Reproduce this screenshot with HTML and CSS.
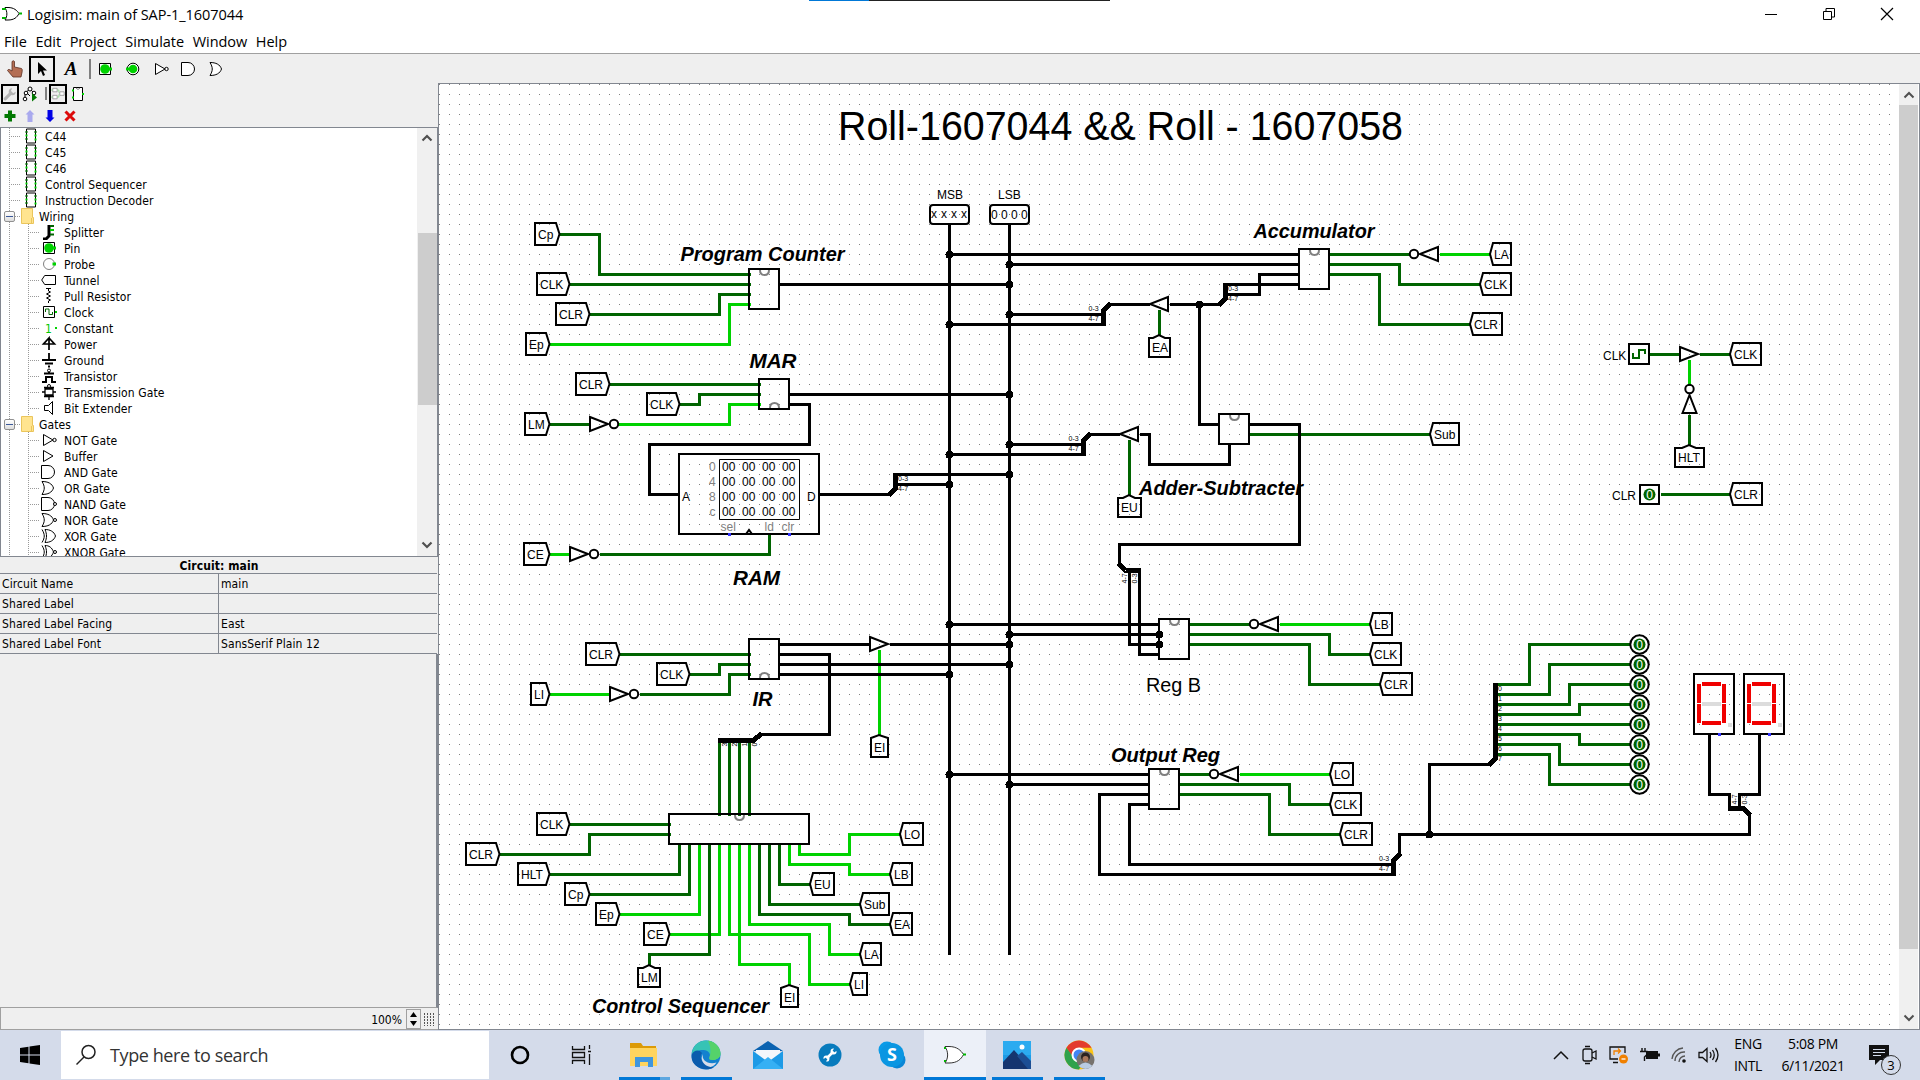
FILE: index.html
```html
<!DOCTYPE html>
<html lang="en">
<head>
<meta charset="utf-8">
<title>Logisim: main of SAP-1_1607044</title>
<link rel="stylesheet" href="styles.css">
</head>
<body>
<svg class="defs" width="0" height="0">
  <defs>
    <symbol id="chip" viewBox="0 0 16 16"><path d="M3 1h9v14H3z" fill="#fff" stroke="#000"/><path d="M2 4h2M2 11h2M11 4h2" stroke="#006400" stroke-width="2"/><path d="M2 7.500h2M11 7.500h2M11 11.500h2" stroke="#00d200" stroke-width="2"/></symbol>
    <symbol id="folder" viewBox="0 0 16 16"><path d="M.5 .5h11v9h1v6H.5z" fill="#ffe48f" stroke="#eac55c"/><path d="M10.500 15V10" stroke="#eac55c"/></symbol>
    <symbol id="splitter" viewBox="0 0 16 16"><path d="M2 15h3l3-3V1" fill="none" stroke="#000" stroke-width="3"/><path d="M9 2h4M9 10.500h4" stroke="#006400" stroke-width="2"/><path d="M9 6h4" stroke="#00d200" stroke-width="2"/></symbol>
    <symbol id="pin" viewBox="0 0 16 16"><path d="M2.500 2.500h11v11h-11z" fill="#fff" stroke="#000"/><circle cx="8" cy="8" r="4.800" fill="#00d200"/><path d="M12 8h3" stroke="#00d200" stroke-width="3"/></symbol>
    <symbol id="outpin" viewBox="0 0 16 16"><circle cx="8" cy="8" r="5.800" fill="#fff" stroke="#000"/><circle cx="8" cy="8" r="4.300" fill="#00d200"/><path d="M1 8h3" stroke="#00d200" stroke-width="3"/></symbol>
    <symbol id="probe" viewBox="0 0 16 16"><circle cx="8" cy="8" r="5.500" fill="#fff" stroke="#808080"/><path d="M11.500 8h3.500" stroke="#00d200" stroke-width="3"/></symbol>
    <symbol id="tunnel" viewBox="0 0 16 16"><path d="M.7 8l3-4.500h10.800v9H3.700z" fill="#fff" stroke="#000"/></symbol>
    <symbol id="resistor" viewBox="0 0 16 16"><path d="M5 .5h5M7.500 1v2l2 1-4 2 4 2-4 2 4 2-2 1v2" fill="none" stroke="#000"/></symbol>
    <symbol id="clock" viewBox="0 0 16 16"><path d="M2.500 2.500h11v11h-11z" fill="#fff" stroke="#000"/><path d="M4.500 8V5h3.500v5.500h3.500V8" fill="none" stroke="#006400"/><path d="M14 8h2" stroke="#00d200" stroke-width="2"/></symbol>
    <symbol id="power" viewBox="0 0 16 16"><path d="M8 14V2L2.500 8h11L8 2" fill="none" stroke="#000" stroke-width="1.700"/></symbol>
    <symbol id="ground" viewBox="0 0 16 16"><path d="M8 1v7M1 8h14M4 11.500h8M7 14.500h2" stroke="#000" stroke-width="1.800"/></symbol>
    <symbol id="transistor" viewBox="0 0 16 16"><path d="M1 14h4V9h6v5h4M3 5.500h10M8 5V3" fill="none" stroke="#000" stroke-width="2"/><circle cx="8" cy="2.500" r="1.500" fill="#fff" stroke="#000"/></symbol>
    <symbol id="tgate" viewBox="0 0 16 16"><path d="M1 8h3V5h8v3h3M4 8v3h8V8M3 3.500h10M3 12.500h10M8 12v4" fill="none" stroke="#000" stroke-width="1.300"/><circle cx="8" cy="2" r="1.500" fill="#fff" stroke="#000"/></symbol>
    <symbol id="extender" viewBox="0 0 16 16"><path d="M3.500 5.500h4l4-4v13l-4-4h-4z" fill="#fff" stroke="#000"/></symbol>
    <symbol id="not" viewBox="0 0 16 16"><path d="M2.500 2.500L12 8l-9.500 5.500z" fill="#fff" stroke="#000"/><circle cx="13.500" cy="8" r="1.700" fill="#fff" stroke="#000"/></symbol>
    <symbol id="buffer" viewBox="0 0 16 16"><path d="M2.500 2.500L12 8l-9.500 5.500z" fill="#fff" stroke="#000"/></symbol>
    <symbol id="and" viewBox="0 0 16 16"><path d="M.5 1.500H7a6.300 6.300 0 0 1 0 13H.5z" fill="#fff" stroke="#000"/></symbol>
    <symbol id="or" viewBox="0 0 16 16"><path d="M1 1.500c6 0 10 2 11.500 6.500C11 12.500 7 14.500 1 14.500c3-5 3-8 0-13z" fill="#fff" stroke="#000"/></symbol>
    <symbol id="nand" viewBox="0 0 16 16"><path d="M.5 1.500H7a6.300 6.300 0 0 1 0 13H.5z" fill="#fff" stroke="#000"/><circle cx="14" cy="8" r="1.500" fill="#fff" stroke="#000"/></symbol>
    <symbol id="nor" viewBox="0 0 16 16"><path d="M1 1.500c6 0 10 2 11.500 6.500C11 12.500 7 14.500 1 14.500c3-5 3-8 0-13z" fill="#fff" stroke="#000"/><circle cx="14" cy="8" r="1.500" fill="#fff" stroke="#000"/></symbol>
    <symbol id="xor" viewBox="0 0 16 16"><path d="M4 1.500c5 0 9 2 10.500 6.500C13 12.500 9 14.500 4 14.500c2-5 2-8 0-13zM1 1.500c3 5 3 8 0 13" fill="none" stroke="#000"/></symbol>
    <symbol id="xnor" viewBox="0 0 16 16"><path d="M4 1.500c4 0 7 2 8.500 6.500C11 12.500 8 14.500 4 14.500c2-5 2-8 0-13zM1 1.500c3 5 3 8 0 13" fill="none" stroke="#000"/><circle cx="14" cy="8" r="1.500" fill="#fff" stroke="#000"/></symbol>
    <pattern id="grid" width="10" height="10" patternUnits="userSpaceOnUse"><rect x="9" y="4" width="1" height="1" fill="#808080"/></pattern>
    <g id="gate-not"><path d="M1 -7L19 0L1 7Z" class="body"/><circle cx="25" cy="0" r="4.200" class="body"/></g>
    <g id="gate-buf"><path d="M1 -7L19 0L1 7Z" class="body"/></g>
    <g id="out0"><circle r="9.200" class="body"/><circle r="6" fill="#006400"/><text x="-3.300" y="4.500" class="white">0</text></g>
    <g id="hex"><rect width="40" height="60" class="body"/><path d="M8 8h19v4H8zM8 47h19v4H8zM3 10h4v19H3zM3 30h4v19H3zM28 10h4v19h-4zM28 30h4v19h-4z" fill="#f00000"/><path d="M8 28h19v4H8zM34 49h4v4h-4z" fill="#dcdcdc"/><path d="M24 59h3v3h-3z" fill="#3232ff"/></g>
  </defs>
</svg>

<header class="titlebar">
  <svg class="app-icon" width="20" height="16" viewBox="0 0 20 16"><path d="M3 1.500h3c6 0 9 3 11 6-2 4-5 6.500-11 6.500H3c2.500-4 2.500-8 0-12.500z" fill="#fff" stroke="#000"/><path d="M0 3h4M0 12h4M17 7.500h3" stroke="#00b400" stroke-width="2"/></svg>
  <span class="title">Logisim: main of SAP-1_1607044</span>
  <i class="drag-strip"></i>
  <div class="win-buttons">
    <svg width="14" height="14" viewBox="0 0 14 14"><path d="M1 7.500h12" stroke="#000"/></svg>
    <svg width="14" height="14" viewBox="0 0 14 14"><path d="M1.500 4.500h8v8h-8zM4 4V1.500h8.500V10H10" fill="none" stroke="#000"/></svg>
    <svg width="14" height="14" viewBox="0 0 14 14"><path d="M1 1l12 12M13 1L1 13" stroke="#000" stroke-width="1.200"/></svg>
  </div>
</header>
<nav class="menubar"><span>File</span><span>Edit</span><span>Project</span><span>Simulate</span><span>Window</span><span>Help</span></nav>

<div class="toolbar">
  <div class="tool"><svg width="18" height="18" viewBox="0 0 18 18"><path d="M6 1.500q1.500-1.500 2.500 0V7l7 1.500q1 .5.700 3l-1.200 5.500H7L1.500 10.500q.5-1.500 2-1L6 11z" fill="#b46e54" stroke="#5a2f22" stroke-width=".8"/></svg></div>
  <div class="tool on"><svg width="18" height="18" viewBox="0 0 18 18"><path d="M5 2v12l3-3 2 5 2-1-2-4.500h4z" fill="#000"/></svg></div>
  <div class="tool letter">A</div>
  <i class="sep"></i>
  <div class="tool"><svg width="16" height="16"><use href="#pin"/></svg></div>
  <div class="tool"><svg width="16" height="16"><use href="#outpin"/></svg></div>
  <div class="tool"><svg width="16" height="16"><use href="#not"/></svg></div>
  <div class="tool"><svg width="16" height="16"><use href="#and"/></svg></div>
  <div class="tool"><svg width="16" height="16"><use href="#or"/></svg></div>
</div>

<main class="workspace">
  <aside class="explorer">
    <div class="mini-bar views">
      <div class="mini on"><svg width="16" height="16" viewBox="0 0 16 16"><path d="M2.500 13.500L9 7" stroke="#b4b4b4" stroke-width="3.500" stroke-linecap="round"/><path d="M14.500 5.500a4 4 0 1 1-4-4L9 4.500 11.500 7z" fill="#b4b4b4"/></svg></div>
      <div class="mini"><svg width="16" height="16" viewBox="0 0 16 16"><path d="M8 3L3 7v6M8 3l4 4v3M5 7l3 3" fill="none" stroke="#000"/><g fill="#fff" stroke="#000"><circle cx="8" cy="3" r="2"/><circle cx="4" cy="7" r="1.800"/><circle cx="12" cy="7" r="1.800"/><circle cx="3" cy="13" r="1.800"/></g><path d="M10 7l5 4.500-5 4z" fill="#007800"/></svg></div>
      <i class="sep"></i>
      <div class="mini on"><svg width="16" height="16" viewBox="0 0 16 16"><path d="M2 1.500h5v4H2zM2 9.500h5v4H2zM10 5.500h5v4h-5z" fill="#fff" stroke="#999"/><path d="M7 3.500h2v3M7 11.500h2v-3M0 3.500h2M0 11.500h2" fill="none" stroke="#8fdc8f"/></svg></div>
      <div class="mini"><svg width="16" height="16" viewBox="0 0 16 16"><path d="M3.500 1.500h9v13h-9z" fill="#fff" stroke="#000"/><path d="M6 2q2 3 4 0" fill="none" stroke="#808080"/><path d="M2 4.500h2M2 11.500h2M12 8h2" stroke="#00d200" stroke-width="2"/></svg></div>
    </div>
    <div class="mini-bar edits">
      <svg width="14" height="14" viewBox="0 0 14 14"><path d="M7 1.500v11M1.500 7h11" stroke="#007800" stroke-width="4"/></svg>
      <svg width="14" height="14" viewBox="0 0 14 14"><path d="M7 1l4.500 4.500H9.500V13h-5V5.500h-2z" fill="#a9a9ee"/></svg>
      <svg width="14" height="14" viewBox="0 0 14 14"><path d="M7 13L2.500 8.500h2V1h5v7.500h2z" fill="#0000e6"/></svg>
      <svg width="14" height="14" viewBox="0 0 14 14"><path d="M2.500 2.500l9 9M11.500 2.500l-9 9" stroke="#dc0a0a" stroke-width="3"/></svg>
    </div>
    <div class="tree-pane">
      <div class="tree">
        <div class="row l2"><svg><use href="#chip"/></svg>C44</div>
        <div class="row l2"><svg><use href="#chip"/></svg>C45</div>
        <div class="row l2"><svg><use href="#chip"/></svg>C46</div>
        <div class="row l2"><svg><use href="#chip"/></svg>Control Sequencer</div>
        <div class="row l2"><svg><use href="#chip"/></svg>Instruction Decoder</div>
        <div class="row lib"><b></b><svg><use href="#folder"/></svg>Wiring</div>
        <div class="row l3"><svg><use href="#splitter"/></svg>Splitter</div>
        <div class="row l3"><svg><use href="#pin"/></svg>Pin</div>
        <div class="row l3"><svg><use href="#probe"/></svg>Probe</div>
        <div class="row l3"><svg><use href="#tunnel"/></svg>Tunnel</div>
        <div class="row l3"><svg><use href="#resistor"/></svg>Pull Resistor</div>
        <div class="row l3"><svg><use href="#clock"/></svg>Clock</div>
        <div class="row l3"><svg viewBox="0 0 16 16"><text x="4" y="13" font-size="12" fill="#00c800">1</text><path d="M14 8h2" stroke="#00d200" stroke-width="2"/></svg>Constant</div>
        <div class="row l3"><svg><use href="#power"/></svg>Power</div>
        <div class="row l3"><svg><use href="#ground"/></svg>Ground</div>
        <div class="row l3"><svg><use href="#transistor"/></svg>Transistor</div>
        <div class="row l3"><svg><use href="#tgate"/></svg>Transmission Gate</div>
        <div class="row l3 last"><svg><use href="#extender"/></svg>Bit Extender</div>
        <div class="row lib"><b></b><svg><use href="#folder"/></svg>Gates</div>
        <div class="row l3"><svg><use href="#not"/></svg>NOT Gate</div>
        <div class="row l3"><svg><use href="#buffer"/></svg>Buffer</div>
        <div class="row l3"><svg><use href="#and"/></svg>AND Gate</div>
        <div class="row l3"><svg><use href="#or"/></svg>OR Gate</div>
        <div class="row l3"><svg><use href="#nand"/></svg>NAND Gate</div>
        <div class="row l3"><svg><use href="#nor"/></svg>NOR Gate</div>
        <div class="row l3"><svg><use href="#xor"/></svg>XOR Gate</div>
        <div class="row l3"><svg><use href="#xnor"/></svg>XNOR Gate</div>
      </div>
      <div class="scroll tree-scroll">
        <svg width="12" height="8" viewBox="0 0 12 8"><path d="M1.500 6.500L6 2l4.500 4.500" fill="none" stroke="#505050" stroke-width="2.200"/></svg>
        <i></i>
        <svg width="12" height="8" viewBox="0 0 12 8"><path d="M1.500 1.500L6 6l4.500-4.500" fill="none" stroke="#505050" stroke-width="2.200"/></svg>
      </div>
    </div>
    <h2 class="attr-title">Circuit: main</h2>
    <div class="attrs">
      <span>Circuit Name</span><span>main</span>
      <span>Shared Label</span><span></span>
      <span>Shared Label Facing</span><span>East</span>
      <span>Shared Label Font</span><span>SansSerif Plain 12</span>
    </div>
    <div class="attr-rest"></div>
    <div class="zoom-bar">
      <span class="zoom-value">100%</span>
      <div class="spinner"><svg width="13" height="9" viewBox="0 0 13 9"><path d="M6.500 2L10 7H3z"/></svg><svg width="13" height="9" viewBox="0 0 13 9"><path d="M6.500 7L10 2H3z"/></svg></div>
      <div class="grid-toggle"></div>
    </div>
  </aside>

  <section class="canvas-pane">
    <svg class="circuit" width="1460" height="945" viewBox="439 84 1460 945">
      <rect x="439" y="84" width="1460" height="945" fill="url(#grid)"/>
      <g class="wires" transform="translate(.5 .5)">
        <g class="lo">
          <path d="M559 234H599V274H750M569 284H750M589 314H719V294H750M609 384H760M679 404H699V394H760M549 424H589M599 554H769V534M619 654H750M689 674H719V664H750M639 694H729V674H750"/>
          <path d="M719 742V815M729 742V815M739 742V815M749 742V815M569 824H670M499 854H589V834H670M549 874H679V844M589 894H689V844"/>
          <path d="M759 844V914H849V924H889M769 844V904H859M779 844V884H809"/>
          <path d="M1159 309V334M1129 439V494M1329 254H1409M1329 264H1399V284H1479M1329 274H1379V324H1469M1249 434H1429"/>
          <path d="M1189 624H1249M1189 634H1329V654H1369M1189 644H1309V684H1379M1179 774H1209M1179 784H1289V804H1329M1179 794H1269V834H1339"/>
          <path d="M1649 354H1679M1699 354H1729M1689 414V444M1660 494H1729"/>
          <path d="M1497 684H1529V644H1630M1497 694H1549V664H1630M1497 704H1569V684H1630M1497 714H1579V704H1630M1497 724H1630M1497 734H1579V744H1630M1497 744H1559V764H1630M1497 754H1549V784H1630"/>
        </g>
        <g class="hi">
          <path d="M549 344H729V304H750M617 424H729V404H760M549 554H569M549 694H609M879 649V734"/>
          <path d="M619 914H699V844M669 934H719V844M729 844V934H809V984H849M739 844V964H789V984M749 844V924H829V954H859M789 844V864H849V874H889M799 844V854H849V834H899"/>
          <path d="M1439 254H1489M1279 624H1369M1239 774H1329M1689 359V385"/>
        </g>
        <path class="lo" d="M649 964V954H709V844"/>
        <g class="bus">
          <path d="M949 224V954M1009 224V954"/>
          <path d="M779 284H1009M789 394H1009M789 404H809V444H649V494H679M819 494H889M896 474H1009M896 484H949"/>
          <path d="M779 644H869M889 644H1009M779 664H1009M779 674H949M779 654H829V734H759"/>
          <path d="M949 254H1299M1009 264H1299M1225 274M1225 284H1299M1225 294H1259V274H1299M1169 304H1219M1199 304V424H1219M1149 304H1109M1103 314H1009M1103 324H949"/>
          <path d="M1139 434H1149V464H1229V444M1119 434H1089M1083 444H1009M1083 454H949M1249 424H1299V544H1119V564"/>
          <path d="M1129 570V644H1159M1139 570V654H1159M949 624H1159M1009 634H1159M949 774H1149M1009 784H1149"/>
          <path d="M1149 794H1099V874H1393M1149 804H1129V864H1393M1399 854V834H1749V814M1429 834V764H1489M1729 808V794H1709V734M1739 808V794H1759V734"/>
        </g>
        <g class="split">
          <path d="M888 495L895 488V472.500M761 733L753 740H717.500M1218 305L1225 298V282.500M1110 303L1103 310V325.500M1090 433L1083 440V455.500M1118 563L1125 570H1140.500M1400 853L1393 860V875.500M1488 765L1495 758V682.500M1750 815L1743 808H1727.500"/>
        </g>
        <g class="joint">
          <circle cx="949" cy="254" r="4"/><circle cx="1009" cy="264" r="4"/><circle cx="1009" cy="284" r="4"/><circle cx="1009" cy="314" r="4"/><circle cx="949" cy="324" r="4"/><circle cx="1009" cy="394" r="4"/><circle cx="1009" cy="444" r="4"/><circle cx="949" cy="454" r="4"/><circle cx="1009" cy="474" r="4"/><circle cx="949" cy="484" r="4"/><circle cx="949" cy="624" r="4"/><circle cx="1009" cy="634" r="4"/><circle cx="1009" cy="644" r="4"/><circle cx="1009" cy="664" r="4"/><circle cx="949" cy="674" r="4"/><circle cx="949" cy="774" r="4"/><circle cx="1009" cy="784" r="4"/><circle cx="1199" cy="304" r="4"/><circle cx="1159" cy="634" r="4"/><circle cx="1159" cy="644" r="4"/><circle cx="1429" cy="834" r="4"/>
        </g>
      </g>

      <g class="shapes">
        <path d="M749 269h30v40h-30zM759 379h30v30h-30zM679 454h140v80H679zM749 639h30v40h-30zM669 814h140v30H669zM1299 249h30v40h-30zM1219 414h30v30h-30zM1159 619h30v40h-30zM1149 769h30v40h-30z"/>
        <path class="notch" d="M760 270q0 5 4.500 5t4.500-5M770 408q0-5 4.500-5t4.500 5M760 678q0-5 4.500-5t4.500 5M735 815q0 5 4.500 5t4.500-5M1310 250q0 5 4.500 5t4.500-5M1230 415q0 5 4.500 5t4.500-5M1170 620q0 5 4.500 5t4.500-5M1160 770q0 5 4.500 5t4.500-5"/>
        <rect x="930" y="205" width="39" height="19" rx="3"/><rect x="990" y="205" width="39" height="19" rx="3"/>
        <path class="thin" d="M719.500 459.500h80v60h-80z"/>
        <path d="M746 534l3-4 3 4"/>
        <path d="M1629 344h20v20h-20zM1640 485h19v19h-19z"/>
        <path class="wave" d="M1633 353v5h6v-8h6v4"/>
      </g>
      <path d="M728 533h3v3h-3zM788 533h3v3h-3z" fill="#3232ff"/>

      <g class="shapes">
        <path d="M535 223H556L559.500 234L556 245H535ZM537 273H566L569.500 284L566 295H537ZM556 303H586L589.500 314L586 325H556ZM526 333H546L549.500 344L546 355H526ZM576 373H606L609.500 384L606 395H576ZM647 393H676L679.500 404L676 415H647ZM525 413H546L549.500 424L546 435H525ZM524 543H546L549.500 554L546 565H524ZM586 643H616L619.500 654L616 665H586ZM657 663H686L689.500 674L686 685H657ZM531 683H546L549.500 694L546 705H531Z"/>
        <path d="M537 813H566L569.500 824L566 835H537ZM466 843H496L499.500 854L496 865H466ZM518 863H546L549.500 874L546 885H518ZM565 883H586L589.500 894L586 905H565ZM596 903H616L619.500 914L616 925H596ZM644 923H666L669.500 934L666 945H644Z"/>
        <path d="M923 823H903L900 834L903 845H923ZM912 863H893L890 874L893 885H912ZM834 873H813L810 884L813 895H834ZM889 893H863L860 904L863 915H889ZM912 913H893L890 924L893 935H912ZM881 943H863L860 954L863 965H881ZM867 973H853L850 984L853 995H867Z"/>
        <path d="M1459 423H1433L1430 434L1433 445H1459ZM1392 613H1373L1370 624L1373 635H1392ZM1401 643H1373L1370 654L1373 665H1401ZM1412 673H1383L1380 684L1383 695H1412ZM1353 763H1333L1330 774L1333 785H1353ZM1361 793H1333L1330 804L1333 815H1361ZM1372 823H1343L1340 834L1343 845H1372Z"/>
        <path d="M1511 243H1493L1490 254L1493 265H1511ZM1511 273H1483L1480 284L1483 295H1511ZM1502 313H1473L1470 324L1473 335H1502ZM1761 343H1733L1730 354L1733 365H1761ZM1762 483H1733L1730 494L1733 505H1762Z"/>
        <path d="M638 987V968L643 968L649 965L655 968H660V987ZM781 1007V988L789 985L798 988V1007ZM871 757V738L879 735L888 738V757ZM1149 357V338L1153 338L1159 335L1165 338H1170V357ZM1118 517V498L1123 498L1129 495L1135 498H1141V517ZM1675 467V448L1682 448L1689 445L1696 448H1704V467Z"/>
      </g>
      <g>
        <use href="#gate-not" x="589" y="424"/><use href="#gate-not" x="569" y="554"/><use href="#gate-not" x="609" y="694"/><use href="#gate-buf" x="869" y="644"/><use href="#gate-buf" x="1679" y="354"/>
        <use href="#gate-buf" transform="translate(1169 304) scale(-1 1)"/><use href="#gate-buf" transform="translate(1139 434) scale(-1 1)"/>
        <use href="#gate-not" transform="translate(1439 254) scale(-1 1)"/><use href="#gate-not" transform="translate(1279 624) scale(-1 1)"/><use href="#gate-not" transform="translate(1239 774) scale(-1 1)"/>
        <use href="#gate-not" transform="translate(1689.500 414) rotate(-90)"/>
        <use href="#out0" x="1639.500" y="644.500"/><use href="#out0" x="1639.500" y="664.500"/><use href="#out0" x="1639.500" y="684.500"/><use href="#out0" x="1639.500" y="704.500"/><use href="#out0" x="1639.500" y="724.500"/><use href="#out0" x="1639.500" y="744.500"/><use href="#out0" x="1639.500" y="764.500"/><use href="#out0" x="1639.500" y="784.500"/>
        <circle cx="1649.500" cy="494.500" r="6" fill="#006400"/><text x="1646.200" y="499" class="white">0</text>
        <use href="#hex" x="1694" y="674"/><use href="#hex" x="1744" y="674"/>
      </g>

      <g class="label">
        <text x="538" y="239">Cp</text><text x="540" y="289">CLK</text><text x="559" y="319">CLR</text><text x="529" y="349">Ep</text><text x="579" y="389">CLR</text><text x="650" y="409">CLK</text><text x="528" y="429">LM</text><text x="527" y="559">CE</text><text x="589" y="659">CLR</text><text x="660" y="679">CLK</text><text x="534" y="699">LI</text>
        <text x="540" y="829">CLK</text><text x="469" y="859">CLR</text><text x="521" y="879">HLT</text><text x="568" y="899">Cp</text><text x="599" y="919">Ep</text><text x="647" y="939">CE</text>
        <text x="904" y="839">LO</text><text x="894" y="879">LB</text><text x="814" y="889">EU</text><text x="864" y="909">Sub</text><text x="894" y="929">EA</text><text x="864" y="959">LA</text><text x="854" y="989">LI</text>
        <text x="641" y="982">LM</text><text x="784" y="1002">EI</text><text x="874" y="752">EI</text><text x="1152" y="352">EA</text><text x="1121" y="512">EU</text><text x="1678" y="462">HLT</text>
        <text x="1434" y="439">Sub</text><text x="1374" y="629">LB</text><text x="1374" y="659">CLK</text><text x="1384" y="689">CLR</text><text x="1334" y="779">LO</text><text x="1334" y="809">CLK</text><text x="1344" y="839">CLR</text>
        <text x="1494" y="259">LA</text><text x="1484" y="289">CLK</text><text x="1474" y="329">CLR</text><text x="1734" y="359">CLK</text><text x="1734" y="499">CLR</text><text x="1603" y="360">CLK</text><text x="1612" y="500">CLR</text>
        <text x="937" y="199">MSB</text><text x="998" y="199">LSB</text>
        <text x="931 941 951 961" y="218">xxxx</text><text x="991 1001 1011 1021" y="219">0000</text>
        <text x="682" y="501">A</text><text x="807" y="501">D</text>
        <text x="722 728.700 742 748.700 762 768.700 782 788.700" y="471">00000000</text><text x="722 728.700 742 748.700 762 768.700 782 788.700" y="486">00000000</text><text x="722 728.700 742 748.700 762 768.700 782 788.700" y="501">00000000</text><text x="722 728.700 742 748.700 762 768.700 782 788.700" y="516">00000000</text>
        <g class="gray"><text x="709" y="471">0</text><text x="709" y="486">4</text><text x="709" y="501">8</text><text x="709.500" y="516">c</text><text x="720.500" y="531">sel</text><text x="764.500" y="531">ld</text><text x="781.500" y="531">clr</text></g>
      </g>
      <g class="tiny">
        <text x="898" y="481">0-3</text><text x="898" y="491">4-7</text><text x="1228" y="291">0-3</text><text x="1228" y="301">4-7</text><text x="1088.500" y="311">0-3</text><text x="1088.500" y="321">4-7</text><text x="1068.500" y="441">0-3</text><text x="1068.500" y="451">4-7</text><text x="1379" y="861">0-3</text><text x="1379" y="871">4-7</text>
        <text transform="translate(1127 583.500) rotate(-90)">4-7</text><text transform="translate(1137 583.500) rotate(-90)">0-3</text><text transform="translate(1737 804.500) rotate(-90)">4-7</text><text transform="translate(1747 804.500) rotate(-90)">0-3</text>
        <text transform="translate(727 746.500) rotate(-90)">3</text><text transform="translate(737 746.500) rotate(-90)">2</text><text transform="translate(747 746.500) rotate(-90)">1</text><text transform="translate(757 746.500) rotate(-90)">0</text>
        <text x="1498" y="691">0</text><text x="1498" y="701">1</text><text x="1498" y="711">2</text><text x="1498" y="721">3</text><text x="1498" y="731">4</text><text x="1498" y="741">5</text><text x="1498" y="751">6</text><text x="1498" y="761">7</text>
      </g>
      <text class="headline" x="838" y="140" textLength="565" lengthAdjust="spacingAndGlyphs">Roll-1607044 &amp;&amp; Roll - 1607058</text>
      <g class="section">
        <text x="680.500" y="261" textLength="164" lengthAdjust="spacingAndGlyphs">Program Counter</text>
        <text x="749.500" y="368" textLength="47" lengthAdjust="spacingAndGlyphs">MAR</text>
        <text x="733" y="585" textLength="47" lengthAdjust="spacingAndGlyphs">RAM</text>
        <text x="752.500" y="706" textLength="20" lengthAdjust="spacingAndGlyphs">IR</text>
        <text x="592" y="1013" textLength="177" lengthAdjust="spacingAndGlyphs">Control Sequencer</text>
        <text x="1139" y="495" textLength="164" lengthAdjust="spacingAndGlyphs">Adder-Subtracter</text>
        <text x="1253.500" y="238" textLength="121" lengthAdjust="spacingAndGlyphs">Accumulator</text>
        <text x="1111" y="762" textLength="109" lengthAdjust="spacingAndGlyphs">Output Reg</text>
        <text x="1146" y="692" class="plain" textLength="55" lengthAdjust="spacingAndGlyphs">Reg B</text>
      </g>
    </svg>
    <div class="scroll canvas-scroll">
      <svg width="12" height="8" viewBox="0 0 12 8"><path d="M1.500 6.500L6 2l4.500 4.500" fill="none" stroke="#505050" stroke-width="2"/></svg>
      <i></i>
      <svg width="12" height="8" viewBox="0 0 12 8"><path d="M1.500 1.500L6 6l4.500-4.500" fill="none" stroke="#505050" stroke-width="2"/></svg>
    </div>
  </section>
</main>

<footer class="taskbar">
  <div class="start"><svg width="20" height="20" viewBox="0 0 20 20"><path d="M0 3l8.500-1.200v7.700H0zM9.500 1.600L20 0v9.500H9.500zM0 10.500h8.500v7.700L0 17zM9.500 10.500H20V20L9.500 18.400z"/></svg></div>
  <div class="search"><svg width="22" height="22" viewBox="0 0 22 22"><circle cx="13.500" cy="8" r="6.500" fill="none" stroke="#222" stroke-width="1.500"/><path d="M9 13l-7.500 7.500" stroke="#222" stroke-width="1.500"/></svg><span>Type here to search</span></div>
  <div class="apps">
    <div class="app"><svg width="20" height="20" viewBox="0 0 20 20"><circle cx="10" cy="10" r="8" fill="none" stroke="#000" stroke-width="2.600"/></svg></div>
    <div class="app"><svg width="22" height="20" viewBox="0 0 22 20"><path d="M1.500 1v3.500h12V1M1.500 19v-3.500h12V19M1.500 7.500h12v5h-12zM18.500 0v4M18.500 9v11M17 6.500h3" fill="none" stroke="#111" stroke-width="1.300"/></svg></div>
    <div class="app run folder"><svg width="30" height="26" viewBox="0 0 30 26"><path d="M1 1h11l2 3h13v20H1z" fill="#dc9a06"/><path d="M1 6h27v18H1z" fill="#ffd45e"/><path d="M6 25V15h18v10h-5v-5h-8v5z" fill="#3f96de"/></svg></div>
    <div class="app run"><svg width="30" height="30" viewBox="0 0 30 30"><circle cx="15" cy="15" r="14.500" fill="#1381cf"/><path d="M1 12C3 4 9 .5 15 .5c8 0 14.500 6 14.500 13 0 4-4 6.500-8 6.500-3 0-4-1-3-3 1.500-3-1-7-6-7S3 12 1 15z" fill="#37c3b5"/><path d="M17 .7c8 1 12.500 7 12.500 13 0 4-4 6.300-8 6.300-3 0-4-1-3-3 2-5 1-11-1.500-16.300z" fill="#55d26a"/><path d="M11 13c-4 5 1 13 12 14.500C12 33-2 25 1 14c2-4 7-5 10-1z" fill="#0b5cad"/><path d="M12 14c-2 6 5 11 13.500 8.500-2 3-4 4-6 4.500-7-1-11-8-7.500-13z" fill="#d6dcea"/></svg></div>
    <div class="app"><svg width="30" height="28" viewBox="0 0 30 28"><path d="M0 10L15 0l15 10z" fill="#0b62b0"/><path d="M3 9h24v12H3z" fill="#f4f7fb"/><path d="M0 10l15 11 15-11v18H0z" fill="#1d9ae6"/><path d="M0 28l15-12 15 12z" fill="#36b0f4"/></svg></div>
    <div class="app"><svg width="24" height="24" viewBox="0 0 24 24"><circle cx="12" cy="12" r="11.500" fill="#087bbd"/><path d="M8.500 15.500l7-7" stroke="#fff" stroke-width="2.500"/><path d="M18.500 8a3 3 0 1 1-2.500-2.500L14.500 8l1.500 1.500zM5.500 16A3 3 0 1 1 8 18.500L9.500 16 8 14.500z" fill="#fff"/></svg></div>
    <div class="app"><svg width="28" height="28" viewBox="0 0 28 28"><circle cx="9" cy="9" r="8.500" fill="#0a9be8"/><circle cx="19" cy="19" r="8.500" fill="#0a86d6"/><circle cx="14" cy="14" r="12" fill="#0a96e2"/><text x="14" y="20" text-anchor="middle" font-size="18" font-weight="700" fill="#fff">S</text></svg></div>
    <div class="app run active"><svg width="24" height="20" viewBox="0 0 24 20"><path d="M2 1.500h4c8 0 12 4 14.500 8-2.500 5-6.500 8.500-14.500 8.500H2c3.500-5 3.500-11 0-16.500z" fill="#fff" stroke="#333"/><path d="M1 3h2M1 16h2M20 9.500h3" stroke="#00b400" stroke-width="2"/></svg></div>
    <div class="app run"><svg width="28" height="28" viewBox="0 0 28 28"><path d="M0 0h28v28H0z" fill="#1e9be6"/><path d="M0 0h28v14H0z" fill="#2cabf0"/><path d="M0 21L11 9l17 19H0z" fill="#15356f"/><path d="M14 15l5-4 9 9v8h-3z" fill="#1c4e94"/><circle cx="19" cy="6" r="2.500" fill="#fff"/></svg></div>
    <div class="app run chrome"><svg width="34" height="30" viewBox="0 0 34 30"><circle cx="15" cy="15" r="14.500" fill="#fbc417"/><path d="M2.500 7.700A14.500 14.500 0 0 1 27.500 7.700H15L9 18z" fill="#e33b2e"/><path d="M2.500 7.700A14.500 14.500 0 0 0 15 29.500l5-9-9-1z" fill="#2fa24c"/><circle cx="15" cy="15" r="6.500" fill="#4285f4" stroke="#fff" stroke-width="2"/><circle cx="21.500" cy="20" r="9" fill="#77736f"/><circle cx="21.500" cy="17" r="4.500" fill="#2a2320"/><circle cx="21.500" cy="19" r="3" fill="#a8775c"/><path d="M14.500 26q7-7 14 0-7 6-14 0z" fill="#b9cbe2"/></svg></div>
  </div>
  <div class="tray">
    <svg width="18" height="12" viewBox="0 0 18 12"><path d="M2 10l7-7 7 7" fill="none" stroke="#111" stroke-width="1.500"/></svg>
    <svg width="18" height="20" viewBox="0 0 18 20"><rect x="3" y="4" width="9" height="12" rx="2" fill="none" stroke="#111" stroke-width="1.300"/><path d="M12 8l4-2v8l-4-2M5 1.500h5M5 18.500h5" fill="none" stroke="#111" stroke-width="1.300"/></svg>
    <svg width="22" height="20" viewBox="0 0 22 20"><path d="M17 8V2H2v12h8M5 17.500h5" fill="none" stroke="#111" stroke-width="1.300"/><path d="M6 10V6h6M10 3.500L12.500 6 10 8.500" fill="none" stroke="#f08000" stroke-width="1.300"/><circle cx="15.500" cy="14" r="4.500" fill="#f08000"/><path d="M13.500 14h4" stroke="#fff" stroke-width="1.300"/></svg>
    <svg width="20" height="18" viewBox="0 0 20 18"><path d="M6 5h12v8H6zM18 7.500h2v3h-2z" fill="#111"/><path d="M2 2v3M5 2v3M0 5.500h7v3L4.500 11v4" fill="none" stroke="#111" stroke-width="1.400"/></svg>
    <svg width="18" height="18" viewBox="0 0 18 18"><path d="M2 13A12 12 0 0 1 13 2M5 15A9 9 0 0 1 15 6M9 16a6 6 0 0 1 6-6" fill="none" stroke="#555" stroke-width="1.400"/><circle cx="14" cy="15" r="1.800" fill="#111"/></svg>
    <svg width="22" height="18" viewBox="0 0 22 18"><path d="M1 6.500h3.500L9 2.500v13l-4.500-4H1zM12 6q2 3 0 6M14.500 4q3.500 5 0 10M17.500 2q5 7 0 14" fill="none" stroke="#111" stroke-width="1.300"/></svg>
  </div>
  <div class="lang"><span>ENG</span><span>INTL</span></div>
  <div class="time"><span>5:08 PM</span><span>6/11/2021</span></div>
  <div class="notice"><svg width="22" height="22" viewBox="0 0 22 22"><path d="M1 1h20v15h-9l-5 5v-5H1z" fill="#111"/><path d="M5 5.500h12M5 8.500h12M5 11.500h8" stroke="#d4dbea"/></svg><b>3</b></div>
</footer>
</body>
</html>
```
FILE: styles.css
```css
* { box-sizing: border-box; }
body { margin: 0; width: 1920px; height: 1080px; overflow: hidden; display: flex; flex-direction: column; background: #fff; color: #000; font-family: "Open Sans", "Noto Sans", sans-serif; }
svg { display: block; flex: none; }
.defs { position: absolute; }

.titlebar { height: 30px; flex: none; display: flex; align-items: center; padding: 0 0 2px 2px; font-size: 14.500px; }
.title { margin-left: 5px; width: 782px; letter-spacing: -.05px; white-space: nowrap; }
.drag-strip { width: 301px; height: 1px; align-self: flex-start; background: linear-gradient(90deg, #0078d7 60px, #222 60px); }
.win-buttons { margin-left: auto; display: flex; gap: 44px; padding-right: 26px; }
.menubar { height: 24px; flex: none; display: flex; align-items: center; gap: 8.600px; padding-left: 4px; font-size: 14.500px; letter-spacing: -.03px; border-bottom: 1px solid #a0a0a0; }

.toolbar { height: 29px; flex: none; display: flex; align-items: center; background: #efefef; padding: 0 0 0 1px; }
.tool { width: 28px; height: 26px; display: flex; align-items: center; justify-content: center; }
.tool.on { width: 26px; border: 2px solid #000; margin: 0 1px 0 0; }
.tool.letter { width: 30px; font: italic bold 19px/26px "Liberation Serif", serif; }
.toolbar .sep { width: 2px; height: 20px; background: #808080; margin: 0 0 0 3px; }

.workspace { flex: 1; display: flex; min-height: 0; }
.explorer { width: 438px; flex: none; background: #efefef; display: flex; flex-direction: column; font: 12px "DejaVu Sans Condensed", "DejaVu Sans", sans-serif; font-stretch: condensed; letter-spacing: .1px; }
.mini-bar { display: flex; align-items: center; flex: none; }
.views { height: 22px; padding: 0 0 1px 1px; }
.mini { width: 20px; height: 20px; display: flex; align-items: center; justify-content: center; }
.mini.on { width: 18px; border: 2px solid #000; }
.mini.on svg { width: 14px; height: 14px; }
.views .mini + .mini { margin-left: 1px; }
.views .sep { width: 2px; height: 13px; background: #808080; margin: 0 2px 0 5px; }
.edits { height: 22px; padding-left: 3px; gap: 6px; }

.tree-pane { height: 430px; flex: none; display: flex; border: 1px solid #828790; background: #fff; }
.tree { width: 416px; overflow: hidden; }
.row { height: 16px; display: flex; align-items: flex-start; white-space: nowrap; line-height: 18px; background: linear-gradient(#999 50%, transparent 50%) 8px 0 / 1px 2px repeat-y; }
.row svg { width: 16px; height: 16px; }
.row::before { content: ""; width: 10px; height: 1px; margin-top: 8px; background: linear-gradient(90deg, #999 50%, transparent 50%) 0 0 / 2px 1px; }
.l2 { padding-left: 10px; }
.l2 svg { margin: 0 5px 0 2px; width: 17px; }
.l3 { padding-left: 29px; background: linear-gradient(#999 50%, transparent 50%) 8px 0 / 1px 2px repeat-y, linear-gradient(#999 50%, transparent 50%) 27px 0 / 1px 2px repeat-y; }
.l3.last { background: linear-gradient(#999 50%, transparent 50%) 8px 0 / 1px 2px repeat-y, linear-gradient(#999 50%, transparent 50%) 27px 0 / 1px 2px repeat-y; }
.l3 svg { margin: 0 7px 0 1px; }
.lib { padding-left: 3px; }
.lib b { order: -3; width: 11px; height: 11px; margin-top: 3px; border: 1px solid #919191; border-radius: 2px; background: linear-gradient(#3c5a9a, #3c5a9a) 50% 50% / 7px 1px no-repeat, linear-gradient(#fff, #ddd); }
.lib::before { order: -2; width: 5px; }
.lib svg { order: -1; margin: 0 2px 0 1px; }

.scroll { width: 20px; background: #f0f0f0; display: flex; flex-direction: column; align-items: center; flex: none; }
.scroll i { width: 100%; background: #cdcdcd; }
.tree-scroll svg:first-child { margin-top: 6px; }
.tree-scroll i { width: 19px; margin-top: 91px; height: 172px; }
.tree-scroll svg:last-child { margin: auto 0 7px; }

.attr-title { margin: 0; height: 16px; flex: none; text-align: center; font: bold 12px/18px "DejaVu Sans Condensed", "DejaVu Sans", sans-serif; font-stretch: condensed; }
.attrs { flex: none; width: 437px; display: grid; grid-template-columns: 218px 218px; gap: 1px; padding: 1px 1px 1px 0; background: #828790; line-height: 20px; }
.attrs span { background: #efefef; height: 19px; padding-left: 2px; }
.attr-rest { flex: 1; border-right: 2px solid #828790; border-bottom: 1px solid #a0a0a0; }
.zoom-bar { height: 22px; flex: none; display: flex; align-items: center; justify-content: flex-end; border: 1px solid #a0a0a0; border-top: 0; border-right: 0; }
.zoom-value { margin: 2px 4px 0 0; letter-spacing: 0; }
.spinner { width: 15px; height: 20px; border: 1px solid #a0a0a0; }
.grid-toggle { width: 12px; height: 14px; margin: 0 2px 0 3px; background: linear-gradient(#efefef 50%, transparent 50%) 0 0 / 3px 3px, linear-gradient(90deg, #555 33%, #efefef 33%) 0 0 / 3px 3px; }

.canvas-pane { flex: 1; display: flex; border: 1px solid #828790; background: #fff; min-width: 0; }
.canvas-scroll { width: 19px; }
.canvas-scroll svg:first-child { margin-top: 7px; }
.canvas-scroll i { margin-top: 6px; height: 844px; }
.canvas-scroll svg:last-child { margin: auto 0 7px; }

.circuit { font-family: "Liberation Sans", Arial, sans-serif; }
.wires { fill: none; shape-rendering: crispEdges; stroke-width: 3; stroke-linejoin: miter; }
.lo { stroke: #006400; }
.hi { stroke: #00d200; }
.bus { stroke: #000; }
.split { stroke: #000; stroke-width: 5; }
.joint { fill: #000; }
.shapes { fill: none; stroke: #000; stroke-width: 2; }
.shapes .notch { stroke: #808080; }
.shapes .thin { stroke-width: 1; }
.shapes .wave { stroke: #006400; }
.body { fill: none; stroke: #000; stroke-width: 2; }
.label { font-size: 12px; }
.white { font-size: 12px; fill: #fff; }
.gray { fill: #808080; }
.tiny { font-size: 7px; }
.headline { font-size: 40px; }
.section { font-size: 20px; font-weight: bold; font-style: italic; }
.section .plain { font-weight: normal; font-style: normal; }

.taskbar { height: 50px; flex: none; display: flex; background: #d4dbea; }
.start { width: 61px; display: flex; align-items: center; justify-content: center; padding-right: 1px; }
.search { width: 428px; margin: 1px 0; background: #fff; display: flex; align-items: center; padding-left: 14px; gap: 13px; font-size: 18px; color: #333; letter-spacing: -.4px; }
.apps { display: flex; }
.app { width: 62px; display: flex; align-items: center; justify-content: center; }
.app.run { background: linear-gradient(#0078d7, #0078d7) 50% 100% / 51px 3px no-repeat; }
.app.run.folder { background: linear-gradient(90deg, #0078d7 41px, #5da7e0 41px) 50% 100% / 51px 3px no-repeat; }
.app.run.active { background: linear-gradient(#0078d7, #0078d7) 50% 100% / 62px 3px no-repeat, #ecf0f8; margin-left: 1px; }
.app.chrome { padding-left: 3px; }
.tray { margin-left: auto; display: flex; align-items: center; gap: 10px; }
.lang, .time { display: flex; flex-direction: column; align-items: center; justify-content: center; font-size: 14px; line-height: 22px; letter-spacing: -.35px; }
.lang { width: 50px; margin-left: 3px; }
.time { width: 80px; }
.notice { width: 67px; display: flex; align-items: center; padding-left: 15px; }
.notice b { width: 20px; height: 20px; margin: 19px 0 0 -9px; border-radius: 50%; border: 1px solid #333; background: #d4dbea; font: 13px/18px "Open Sans", sans-serif; text-align: center; }
```
